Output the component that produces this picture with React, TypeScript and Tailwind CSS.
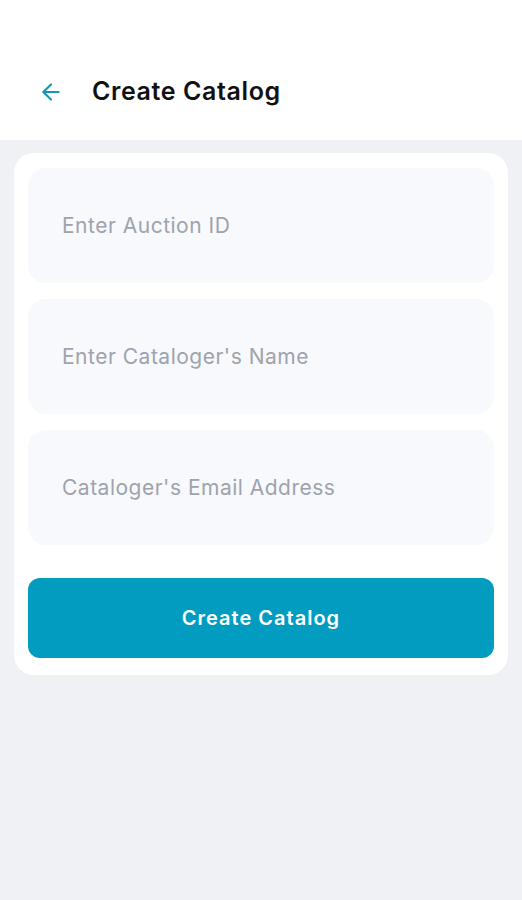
import { ArrowLeft } from "lucide-react";

const fields = ["Enter Auction ID", "Enter Cataloger's Name", "Cataloger's Email Address"];

export default function App() {
  return (
    <div className="min-h-[900px] w-full bg-[#f0f1f5] font-['Inter',sans-serif]">
      <header className="flex h-[140px] items-center gap-[28px] bg-white px-[38px] pt-[44px]">
        <ArrowLeft className="h-[26px] w-[26px] text-[#1597b5]" strokeWidth={2} />
        <h1 className="text-[25px] font-semibold tracking-[0.6px] text-[#111]">Create Catalog</h1>
      </header>

      <main className="px-[14px] pt-[13px]">
        <div className="flex flex-col rounded-[20px] bg-white px-[14px] pb-[17px] pt-[15px]">
          <div className="flex flex-col gap-[16px]">
            {fields.map((f) => (
              <input
                key={f}
                placeholder={f}
                className="h-[115px] w-full rounded-[18px] bg-[#f7f9fc] px-[34px] text-[21px] tracking-[0.5px] text-[#333] outline-none placeholder:text-[#9ea3ad]"
              />
            ))}
          </div>
          <button className="mt-[33px] h-[80px] w-full rounded-[12px] bg-[#019cc0] text-[20px] font-semibold tracking-[1px] text-white">
            Create Catalog
          </button>
        </div>
      </main>
    </div>
  );
}
